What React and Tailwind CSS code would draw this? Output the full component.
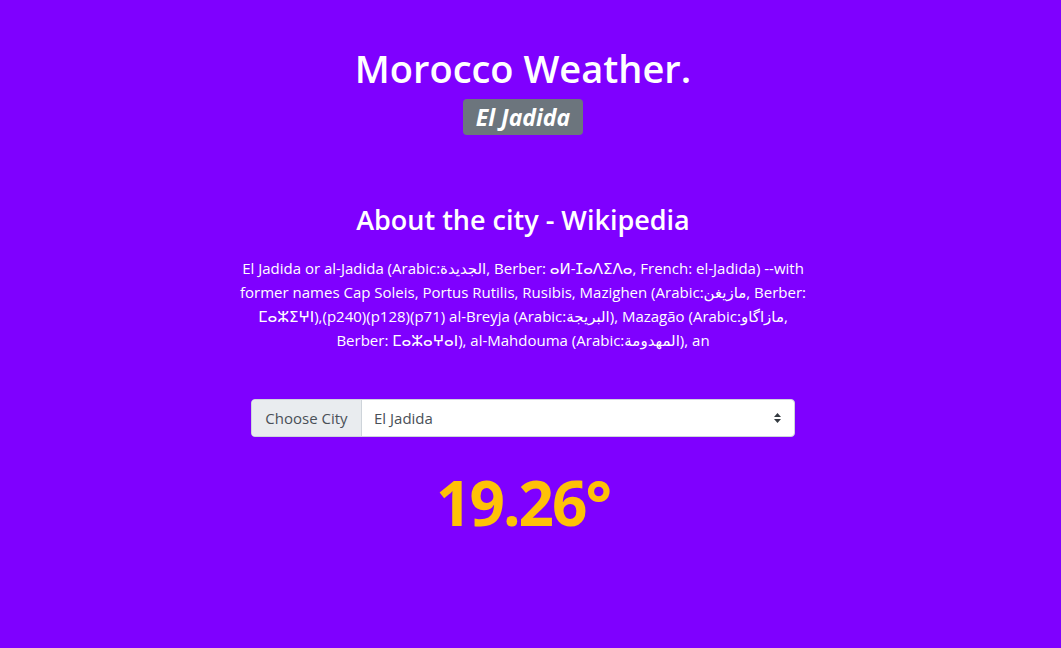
export default function App() {
  const font = { fontFamily: '"Open Sans", "DejaVu Sans", sans-serif' };

  return (
    <div className="min-h-screen bg-[#7f00ff] text-white" style={font}>
      <div className="w-[1046px] flex flex-col items-center pt-[44px]">
        <h1 className="text-[38px] leading-[48px] font-semibold">Morocco Weather.</h1>
        <span className="mt-[7px] h-[36px] px-[13px] flex items-center rounded-[4px] bg-[#6c757d] text-[23px] font-bold italic">
          El Jadida
        </span>

        <h3 className="mt-[68px] text-[27px] leading-[34px] font-semibold">About the city - Wikipedia</h3>
        <p className="mt-[19px] w-[580px] text-center text-[15px] leading-[24px]">
          El Jadida or al-Jadida (Arabic:الجديدة, Berber: ⴰⵍ-ⵊⴰⴷⵉⴷⴰ, French: el-Jadida) --with former names Cap Soleis, Portus Rutilis, Rusibis, Mazighen (Arabic:مازيغن, Berber: ⵎⴰⵣⵉⵖⵏ),(p240)(p128)(p71) al-Breyja (Arabic:البريجة), Mazagão (Arabic:مازاگاو, Berber: ⵎⴰⵣⴰⵖⴰⵏ), al-Mahdouma (Arabic:المهدومة), an
        </p>

        <div className="mt-[47px] w-[544px] h-[38px] flex rounded-[4px] overflow-hidden border border-[#ced4da] bg-white text-[15px] text-[#495057]">
          <div className="w-[110px] shrink-0 flex items-center justify-center bg-[#e9ecef] border-r border-[#ced4da]">
            Choose City
          </div>
          <div className="flex-1 flex items-center justify-between pl-[12px] pr-[12px]">
            <span>El Jadida</span>
            <svg width="9" height="12" viewBox="0 0 9 12" className="text-[#343a40]">
              <path d="M4.5 1 L8 5 H1 Z" fill="currentColor" />
              <path d="M4.5 11 L8 7 H1 Z" fill="currentColor" />
            </svg>
          </div>
        </div>

        <div className="mt-[22px] text-[62px] leading-[86px] font-bold tracking-[-2px] text-[#ffc107]">19.26°</div>
      </div>
    </div>
  );
}
